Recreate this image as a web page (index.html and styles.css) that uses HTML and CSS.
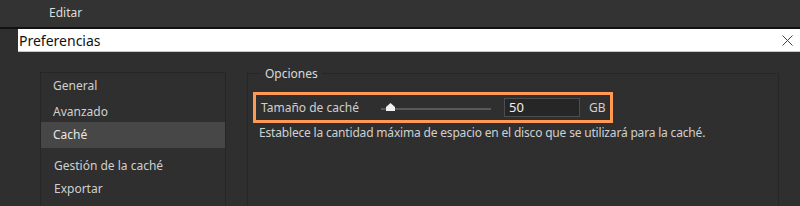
FILE: index.html
```html
<!DOCTYPE html>
<html lang="es">
<head>
<meta charset="utf-8">
<title>Preferencias</title>
<link rel="stylesheet" href="styles.css">
</head>
<body>
<div class="menubar"><span class="menu-item">Editar</span></div>
<div class="titlebar">
  <span class="title">Preferencias</span>
  <svg class="close" width="11" height="11" viewBox="0 0 11 11"><path d="M0.5 0.5L10.5 10.5M10.5 0.5L0.5 10.5" stroke="#444" stroke-width="1" fill="none"/></svg>
</div>
<div class="content">
  <nav class="sidebar">
    <div class="nav-item first">General</div>
    <div class="nav-item second">Avanzado</div>
    <div class="nav-item selected">Caché</div>
    <div class="nav-item sub">Gestión de la caché</div>
    <div class="nav-item sub2">Exportar</div>
  </nav>
  <fieldset class="options">
    <legend>Opciones</legend>
    <div class="highlight">
      <span class="label">Tamaño de caché</span>
      <div class="slider">
        <div class="track"></div>
        <svg class="thumb" width="9" height="8" viewBox="0 0 9 8"><path d="M4.5 0L9 4V8H0V4Z" fill="#f2f2f2"/></svg>
      </div>
      <div class="input">50</div>
      <span class="unit">GB</span>
    </div>
    <p class="desc">Establece la cantidad máxima de espacio en el disco que se utilizará para la caché.</p>
  </fieldset>
</div>
</body>
</html>
```
FILE: styles.css
```css
html, body {
  margin: 0;
  padding: 0;
  background: #2f2f2f;
  height: 206px;
  overflow: hidden;
  font-family: "Noto Sans", "DejaVu Sans", sans-serif;
  font-size: 12px;
  color: #cfcfcf;
}
.menubar {
  height: 27px;
  background: #333333;
  border-bottom: 2px solid #121212;
  display: flex;
  align-items: center;
}
.menu-item {
  padding-left: 49px;
  padding-bottom: 2px;
  color: #dcdcdc;
}
.titlebar {
  margin-left: 18px;
  height: 22px;
  background: #ffffff;
  border-bottom: 1px solid #c8c8c8;
  display: flex;
  align-items: center;
  justify-content: space-between;
  padding-left: 1px;
  padding-right: 7px;
}
.title {
  color: #111;
  font-size: 14px;
}
.content {
  display: flex;
  padding-left: 40px;
  padding-top: 20px;
  height: 140px;
}
.sidebar {
  width: 184px;
  border: 1px solid #262626;
  border-bottom: none;
}
.nav-item {
  height: 24px;
  line-height: 24px;
  padding-left: 12px;
}
.nav-item.first {
  height: 25px;
  line-height: 25px;
}
.nav-item.second {
  height: 24px;
  line-height: 27px;
}
.nav-item.selected {
  height: 26px;
  line-height: 26px;
  background: #474747;
  color: #e6e6e6;
}
.nav-item.sub {
  margin-top: 6px;
  padding-left: 13px;
}
.nav-item.sub2 {
  height: 22px;
  line-height: 22px;
  padding-left: 13px;
}
.options {
  margin: -7px 0 0 21px;
  width: 532px;
  border: 1px solid #262626;
  border-bottom: none;
  padding: 10px 0 0 5px;
  box-sizing: border-box;
  min-width: 0;
}
.options legend {
  padding: 0 4px;
  margin-left: 8px;
  color: #dadada;
}
.highlight {
  width: 349px;
  height: 25px;
  border: 3px solid #ff9a55;
  display: flex;
  align-items: center;
  padding-left: 5px;
}
.label {
  width: 120px;
}
.slider {
  position: relative;
  width: 110px;
  height: 10px;
}
.track {
  position: absolute;
  left: 0;
  right: 0;
  top: 5px;
  height: 2px;
  background: #585858;
}
.thumb {
  position: absolute;
  left: 5px;
  top: 0;
}
.input {
  margin-left: 13px;
  width: 70px;
  height: 17px;
  line-height: 17px;
  background: #262626;
  border: 1px solid #4d4d4d;
  padding-left: 4px;
  color: #f0f0f0;
  font-size: 13px;
}
.unit {
  margin-left: 9px;
}
.desc {
  margin: 1px 0 0 6px;
  letter-spacing: -0.18px;
}
```
